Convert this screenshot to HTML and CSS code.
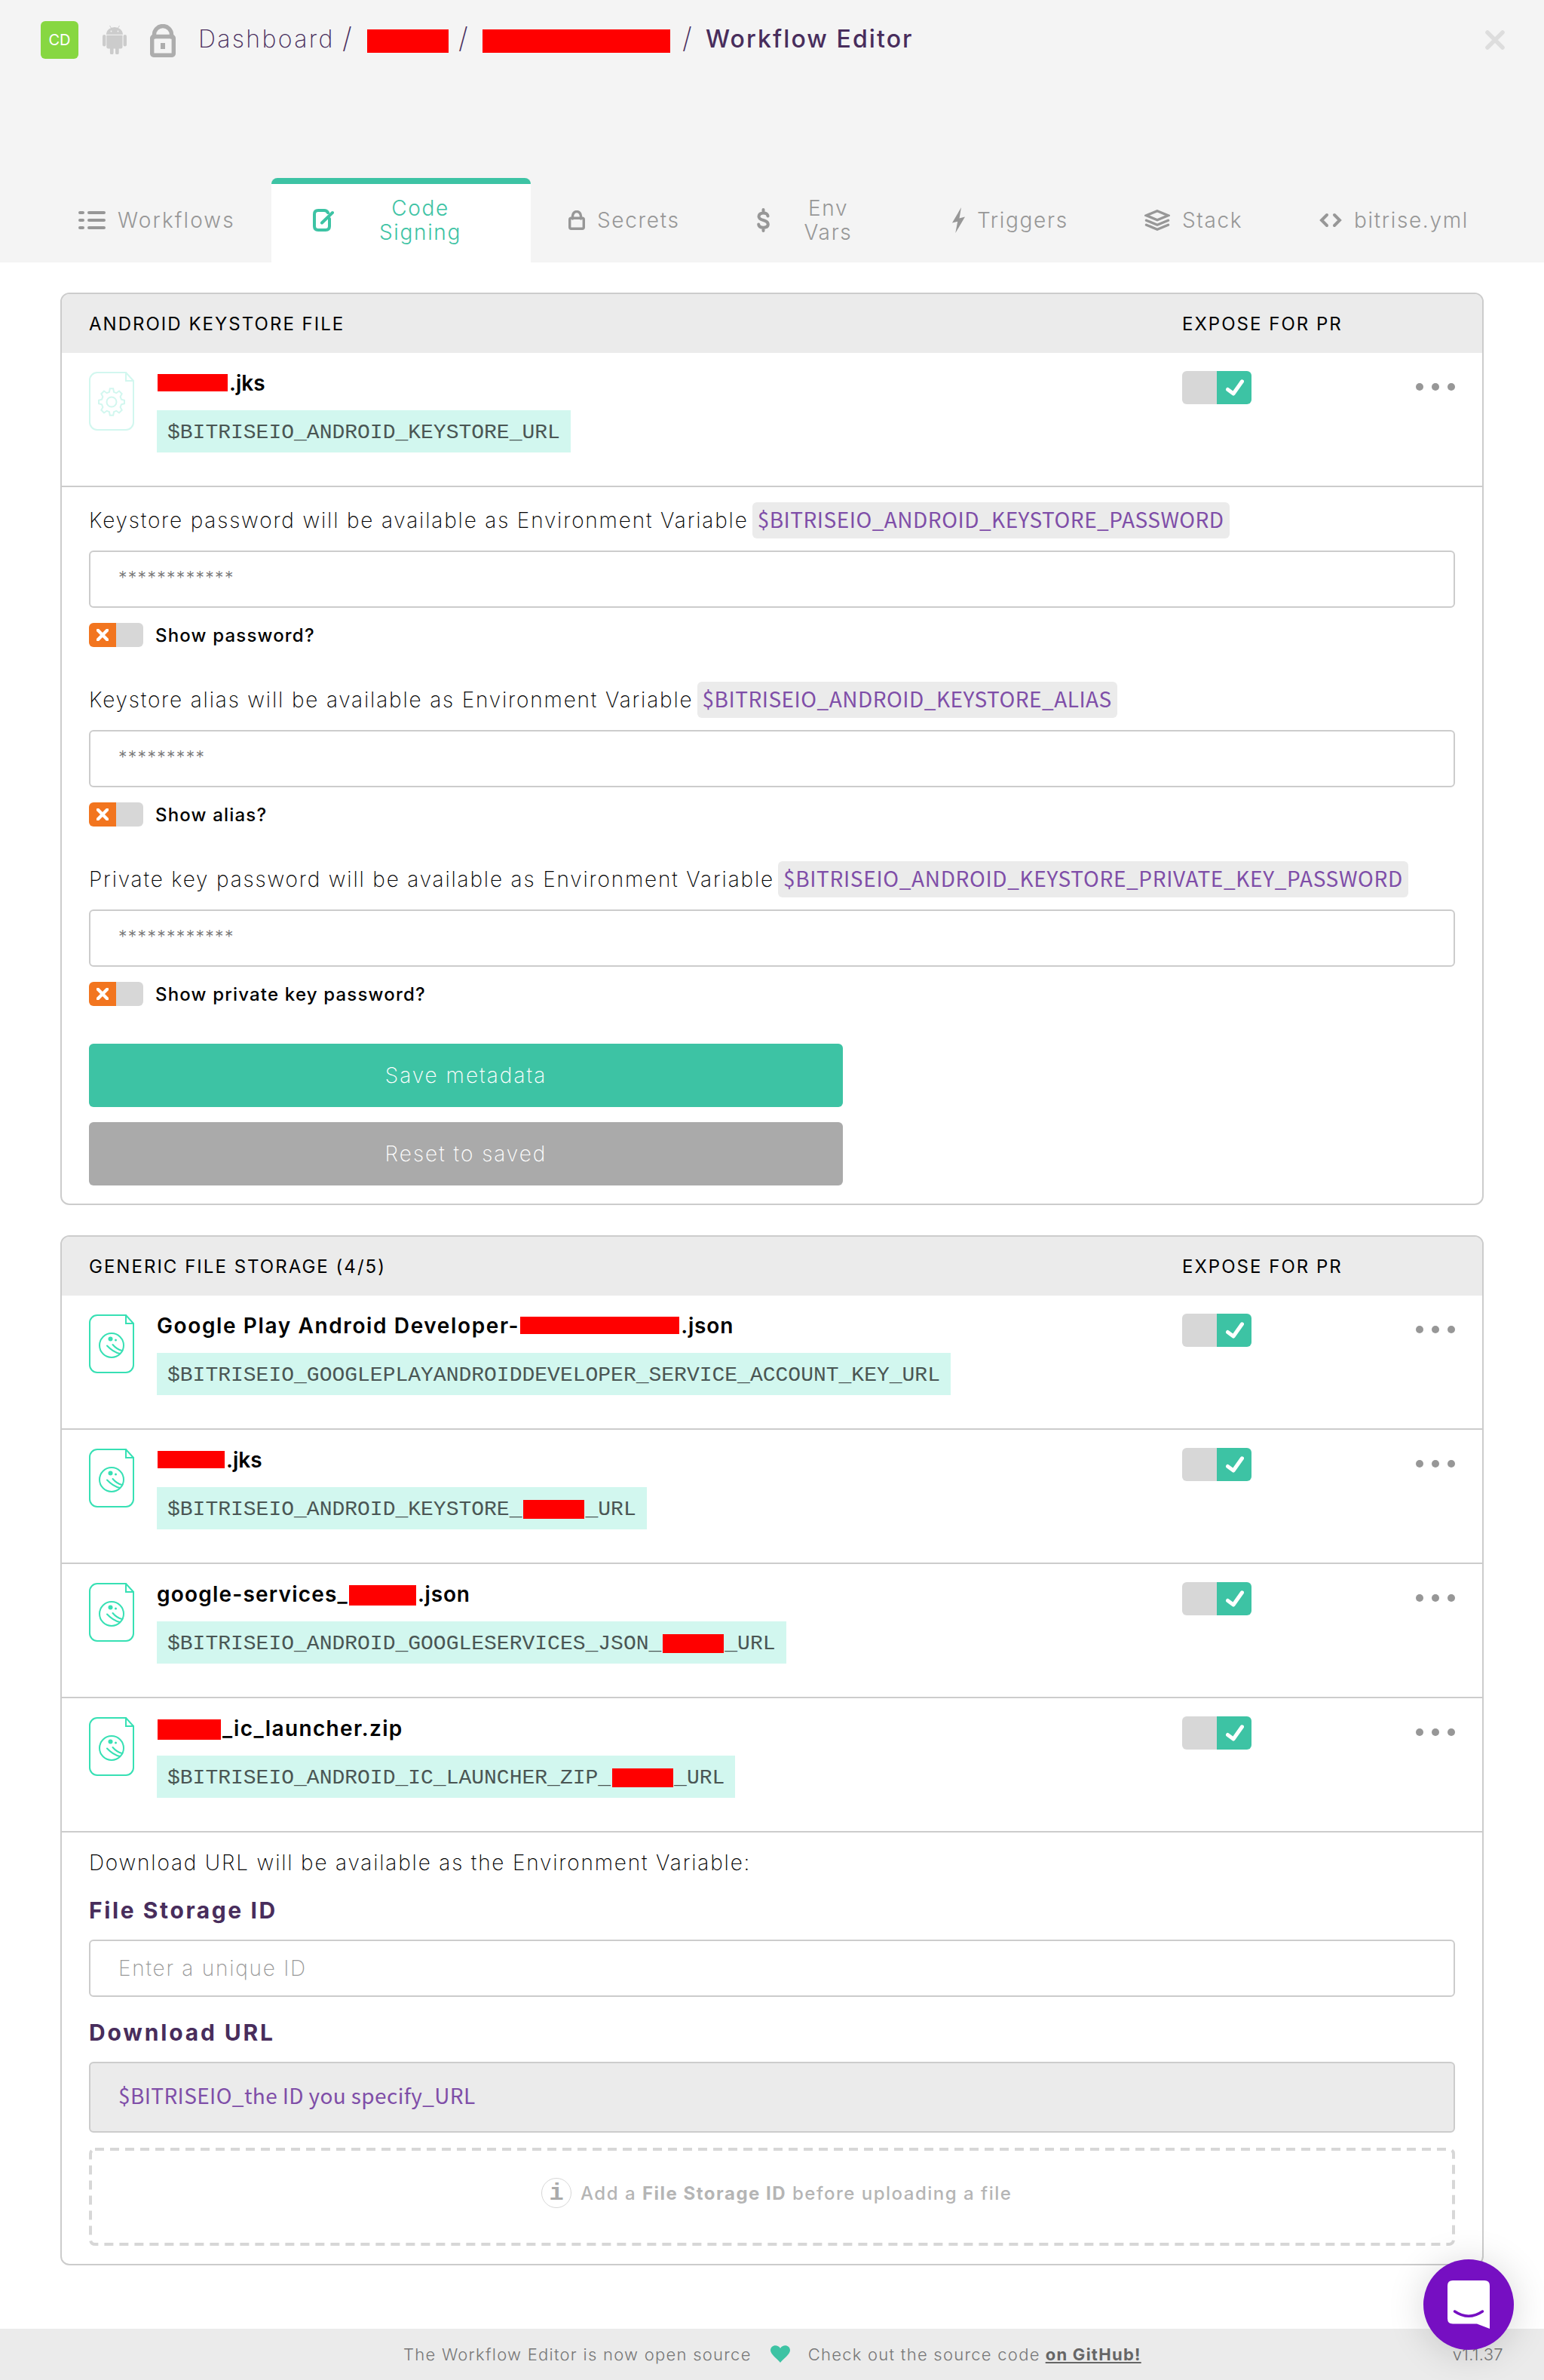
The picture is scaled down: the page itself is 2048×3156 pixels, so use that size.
FILE: index.html
```html
<!DOCTYPE html>
<html lang="en">
<head>
<meta charset="utf-8">
<title>Workflow Editor</title>
<link rel="stylesheet" href="styles.css">
</head>
<body>
<svg class="defs" width="0" height="0" aria-hidden="true">
  <symbol id="file" viewBox="0 0 60 78">
    <path d="M49 1H11A10 10 0 0 0 1 11V67A10 10 0 0 0 11 77H49A10 10 0 0 0 59 67V12Z"/>
    <path d="M49 1V12H59"/>
  </symbol>
  <symbol id="planet" viewBox="0 0 60 78">
    <circle cx="30" cy="41" r="16"/>
    <path d="M24 41.500Q32 50 41 52M31.500 40Q37 46.500 44 48"/>
    <circle cx="28.500" cy="32.500" r="3" class="dot"/>
    <circle cx="35.500" cy="34" r="1.500" class="dot"/>
  </symbol>
  <symbol id="check" viewBox="0 0 24 22">
    <path d="M2.500 13.500 10 19 21.500 2.800"/>
  </symbol>
  <symbol id="cross" viewBox="0 0 26 26">
    <path d="M3 3 23 23M23 3 3 23"/>
  </symbol>
</svg>

<header class="top">
  <div class="crumbs">
    <span class="logo">CD</span>
    <svg class="android" viewBox="0 0 32 38">
      <path class="antenna" d="M9.500 0 12 4M22.500 0 20 4"/>
      <path d="M5 11.700A10.900 9.700 0 0 1 26.900 11.700Z"/>
      <path d="M5.300 12.700H26.500V28Q26.500 30.500 24 30.500H21.700V36A2.350 2.350 0 0 1 17 36V30.500H14.600V36A2.350 2.350 0 0 1 9.900 36V30.500H8Q5.300 30.500 5.300 28Z"/>
      <rect x="0" y="12" width="4.400" height="15.400" rx="2.200"/>
      <rect x="27.600" y="12" width="4.400" height="15.400" rx="2.200"/>
      <circle class="eye" cx="11.500" cy="7.500" r=".9"/><circle class="eye" cx="20.500" cy="7.500" r=".9"/>
    </svg>
    <svg class="biglock" viewBox="0 0 34 44">
      <path d="M5.500 17V14A11.300 11.300 0 0 1 28.500 14V17"/>
      <rect x="2.700" y="16.500" width="28.600" height="24.800" rx="2"/>
      <rect class="hole" x="14" y="25" width="6" height="8"/>
    </svg>
    <span class="crumb">Dashboard</span>
    <span class="slash">/</span>
    <i class="red r1"></i>
    <span class="slash">/</span>
    <i class="red r2"></i>
    <span class="slash">/</span>
    <span class="here">Workflow Editor</span>
    <svg class="close" viewBox="0 0 26 26"><use href="#cross"/></svg>
  </div>
  <nav class="tabs">
    <a class="tab first">
      <svg width="36" height="24" viewBox="0 0 36 24" class="stroke4"><path d="M2 2H6M14 2H34M2 12H6M14 12H34M2 22H6M14 22H34"/></svg>
      <span>Workflows</span>
    </a>
    <a class="tab active">
      <svg width="28" height="30" viewBox="0 0 28 30" class="stroke4"><path d="M22 13V23Q22 28 17 28H7Q2 28 2 23V7Q2 2 7 2H15Q18.500 2 20 5M12 18.500 26 5"/></svg>
      <span class="two">Code<br>Signing</span>
    </a>
    <a class="tab">
      <svg width="22" height="26" viewBox="0 0 22 26" class="lock"><path d="M5.500 11V7.500A5.500 6 0 0 1 16.500 7.500V11"/><rect x="1.700" y="10.200" width="18.600" height="14" rx="2"/></svg>
      <span>Secrets</span>
    </a>
    <a class="tab">
      <svg width="17" height="32" viewBox="0 0 17 32" class="stroke4"><path d="M14.500 10.500Q14 6.500 8.500 6.500T2.500 11Q2.500 14.500 8.500 16T14.800 21.500Q14.500 25.700 8.500 25.700T2.200 21.500M8.500 2V5M8.500 27V30"/></svg>
      <span class="two env">Env<br>Vars</span>
    </a>
    <a class="tab">
      <svg width="17" height="34" viewBox="0 0 17 34"><path fill="currentColor" d="M12 0 0 20.500 7.200 18.800 4.300 34 17 12.500 9.500 14.500Z"/></svg>
      <span>Triggers</span>
    </a>
    <a class="tab">
      <svg width="34" height="28" viewBox="0 0 34 28" class="layers"><path d="M17 1.700 31.500 7.700 17 13.700 2.500 7.700ZM2.500 14.200 17 20.200 31.500 14.200M2.500 20.200 17 26.200 31.500 20.200"/></svg>
      <span>Stack</span>
    </a>
    <a class="tab">
      <svg width="30" height="20" viewBox="0 0 30 20" class="stroke4"><path d="M10 3 3 10 10 17M20 3 27 10 20 17"/></svg>
      <span>bitrise.yml</span>
    </a>
  </nav>
</header>

<main>
  <section class="panel">
    <div class="head"><span>ANDROID KEYSTORE FILE</span><span>EXPOSE FOR PR</span></div>
    <div class="row">
      <svg class="file faded" viewBox="0 0 60 78"><use href="#file"/><circle cx="30" cy="40" r="6.500"/>
        <path d="M27.800 22.300H32.200L33 26.800L36.300 28.200L40 25.500L43.700 29.200L41.600 33L43 36.600L47 37.800V42.200L43 43.400L41.600 47L43.700 50.800L40 54.500L36.300 51.800L33 53.200L32.200 57.700H27.800L27 53.200L23.700 51.800L20 54.500L16.300 50.800L18.400 47L17 43.400L13 42.200V37.800L17 36.600L18.400 33L16.300 29.200L20 25.500L23.700 28.200L27 26.800Z"/></svg>
      <div class="info">
        <div class="name"><i class="red n0"></i><span>.jks</span></div>
        <div class="tag">$BITRISEIO_ANDROID_KEYSTORE_URL</div>
      </div>
      <span class="switch on"><svg viewBox="0 0 24 22"><use href="#check"/></svg></span>
      <span class="dots"><i></i><i></i><i></i></span>
    </div>
    <div class="form">
      <div class="field">
        <div class="label"><span>Keystore password will be available as Environment Variable</span><code>$BITRISEIO_ANDROID_KEYSTORE_PASSWORD</code></div>
        <div class="input stars">************</div>
        <div class="show"><span class="switch off"><svg viewBox="0 0 26 26"><use href="#cross"/></svg></span><span>Show password?</span></div>
      </div>
      <div class="field">
        <div class="label"><span>Keystore alias will be available as Environment Variable</span><code>$BITRISEIO_ANDROID_KEYSTORE_ALIAS</code></div>
        <div class="input stars">*********</div>
        <div class="show"><span class="switch off"><svg viewBox="0 0 26 26"><use href="#cross"/></svg></span><span>Show alias?</span></div>
      </div>
      <div class="field">
        <div class="label"><span>Private key password will be available as Environment Variable</span><code class="long">$BITRISEIO_ANDROID_KEYSTORE_PRIVATE_KEY_PASSWORD</code></div>
        <div class="input stars">************</div>
        <div class="show"><span class="switch off"><svg viewBox="0 0 26 26"><use href="#cross"/></svg></span><span>Show private key password?</span></div>
      </div>
      <div class="button save">Save metadata</div>
      <div class="button reset">Reset to saved</div>
    </div>
  </section>

  <section class="panel">
    <div class="head"><span>GENERIC FILE STORAGE (4/5)</span><span>EXPOSE FOR PR</span></div>
    <div class="row">
      <svg class="file" viewBox="0 0 60 78"><use href="#file"/><use href="#planet"/></svg>
      <div class="info">
        <div class="name"><span class="wide">Google Play Android Developer-</span><i class="red n1"></i><span class="ext">.json</span></div>
        <div class="tag">$BITRISEIO_GOOGLEPLAYANDROIDDEVELOPER_SERVICE_ACCOUNT_KEY_URL</div>
      </div>
      <span class="switch on"><svg viewBox="0 0 24 22"><use href="#check"/></svg></span>
      <span class="dots"><i></i><i></i><i></i></span>
    </div>
    <div class="row">
      <svg class="file" viewBox="0 0 60 78"><use href="#file"/><use href="#planet"/></svg>
      <div class="info">
        <div class="name"><i class="red n2"></i><span>.jks</span></div>
        <div class="tag">$BITRISEIO_ANDROID_KEYSTORE_<i class="red"></i>_URL</div>
      </div>
      <span class="switch on"><svg viewBox="0 0 24 22"><use href="#check"/></svg></span>
      <span class="dots"><i></i><i></i><i></i></span>
    </div>
    <div class="row">
      <svg class="file" viewBox="0 0 60 78"><use href="#file"/><use href="#planet"/></svg>
      <div class="info">
        <div class="name"><span class="services">google-services_</span><i class="red n3"></i><span class="ext">.json</span></div>
        <div class="tag">$BITRISEIO_ANDROID_GOOGLESERVICES_JSON_<i class="red"></i>_URL</div>
      </div>
      <span class="switch on"><svg viewBox="0 0 24 22"><use href="#check"/></svg></span>
      <span class="dots"><i></i><i></i><i></i></span>
    </div>
    <div class="row">
      <svg class="file" viewBox="0 0 60 78"><use href="#file"/><use href="#planet"/></svg>
      <div class="info">
        <div class="name"><i class="red n4"></i><span class="launcher">_ic_launcher.zip</span></div>
        <div class="tag">$BITRISEIO_ANDROID_IC_LAUNCHER_ZIP_<i class="red"></i>_URL</div>
      </div>
      <span class="switch on"><svg viewBox="0 0 24 22"><use href="#check"/></svg></span>
      <span class="dots"><i></i><i></i><i></i></span>
    </div>
    <div class="form">
      <p class="intro">Download URL will be available as the Environment Variable:</p>
      <h3>File Storage ID</h3>
      <div class="input placeholder">Enter a unique ID</div>
      <h3 class="second">Download URL</h3>
      <div class="input readonly">$BITRISEIO_the ID you specify_URL</div>
      <div class="drop">
        <svg class="dash" width="1812" height="130"><rect x="2" y="2" width="1808" height="126" rx="6"/></svg>
        <span class="badge">i</span>
        <span class="hint">Add a <b>File Storage ID</b> before uploading a file</span>
      </div>
    </div>
  </section>
</main>

<footer>
  <span>The Workflow Editor is now open source</span>
  <svg class="heart" viewBox="0 0 26 23"><path d="M13 23C9 18 0 12 0 6.500C0-.500 9.500-2.200 13 4C16.500-2.200 26-.500 26 6.500C26 12 17 18 13 23Z"/></svg>
  <span>Check out the source code</span>
  <b>on GitHub!</b>
  <span class="version">v1.1.37</span>
</footer>
<div class="chat"><svg viewBox="0 0 56 64"><path class="bubble" d="M7 0H49Q56 0 56 7V64L39 57.500H7Q0 57.500 0 50.500V7Q0 0 7 0Z"/><path class="smile" d="M9.500 41Q28 53.500 46.500 41"/></svg></div>
</body>
</html>
```
FILE: styles.css
```css
* { box-sizing: border-box; }
body { margin: 0; background: #fff; color: #000; font-family: Inter, "Liberation Sans", sans-serif; font-size: 28px; font-weight: 200; }
svg { display: block; flex: none; fill: none; stroke-linecap: round; }
.defs { position: absolute; }
.red { display: block; flex: none; background: #f00; }

/* Header */
.top { height: 348px; background: #f4f4f4; display: flex; flex-direction: column; justify-content: space-between; }
.crumbs { display: flex; align-items: flex-start; height: 110px; padding-left: 54px; color: #482d5c; font-size: 32px; line-height: 40px; }
.logo { width: 50px; height: 50px; margin-top: 28px; border-radius: 6px; background: #87d741; color: #fff; font-size: 20px; font-weight: 400; line-height: 50px; text-align: center; }
.android { width: 32px; height: 38px; margin: 34px 0 0 32px; fill: #ccc; }
.android .antenna { stroke: #ccc; stroke-width: 1; }
.android .eye { fill: #f4f4f4; }
.biglock { width: 34px; height: 44px; margin: 32px 0 0 31px; stroke: #adadad; stroke-width: 5.400; }
.biglock .hole { fill: #adadad; stroke: none; }
.crumb { width: 191px; margin: 32px 0 0 30px; letter-spacing: 2.350px; }
.slash { width: 32px; margin-top: 30px; font-size: 38px; }
.r1, .r2 { height: 31px; }
.r1 { width: 108px; margin: 39px 13px 0 1px; }
.r2 { width: 249px; margin: 39px 16px 0 0; }
.here { margin: 32px 0 0 -1px; font-weight: 500; letter-spacing: 2.100px; }
.close { width: 26px; height: 26px; margin: 40px 52px 0 auto; stroke: #ddd; stroke-width: 5.500; }

.tabs { display: grid; grid-template-columns: 360px 344px 250px 259px 255px 232px 1fr; height: 112px; color: #979797; font-weight: 300; letter-spacing: 1.650px; }
.tab { display: flex; align-items: center; gap: 16px; padding-left: 50px; line-height: 32px; }
.first { padding-left: 104px; letter-spacing: 2.100px; }
.active { padding: 0 0 8px 55px; border-top: 8px solid #3dc3a4; border-radius: 8px 8px 0 0; background: #fff; color: #3dc3a4; }
.two { width: 197px; text-align: center; }
.env { width: 123px; }
.stroke4 { stroke: currentColor; stroke-width: 4; }
.lock, .layers { stroke: currentColor; stroke-width: 3.400; }

/* Panels */
main { display: flex; flex-direction: column; gap: 40px; padding: 40px 80px 84px; }
.panel { border: 2px solid #ccc; border-radius: 12px; overflow: hidden; }
.head { display: grid; grid-template-columns: 1450px 1fr; height: 78px; padding-left: 36px; background: #ebebeb; font-size: 24px; font-weight: 400; letter-spacing: 2.020px; line-height: 79px; }
.row { display: grid; grid-template-columns: 90px 1360px 310px auto; align-items: start; height: 178px; padding-left: 36px; border-bottom: 2px solid #ccc; }
.file { width: 60px; height: 78px; margin-top: 25px; stroke: #37e0b4; stroke-width: 2; }
.dot { fill: #37e0b4; stroke: none; }
.faded { stroke: #d2f7ef; }
.name { display: flex; height: 56px; margin-top: 20px; font-weight: 600; line-height: 40px; }
.name .red { height: 23px; margin: 8px 2px 0 1px; }
.name .n0 { width: 93px; }
.name .n1 { width: 211px; }
.name .n2 { width: 89px; }
.name .n3 { width: 89px; height: 27px; }
.name .n4 { width: 84px; height: 27px; }
.wide { letter-spacing: 1.620px; }
.services { letter-spacing: 1.200px; }
.launcher { letter-spacing: 1.350px; }
.ext { letter-spacing: .800px; }
.tag { display: flex; width: max-content; height: 56px; padding: 0 14px; background: #d2f7ef; color: #4a5654; font-family: "Liberation Mono", monospace; line-height: 60px; }
.tag .red { width: 81px; height: 25px; margin: 17px 1px 0 2px; }
.switch { display: flex; align-items: center; border-radius: 6px; }
.on { width: 92px; height: 44px; margin-top: 24px; padding-left: 58px; background: linear-gradient(90deg, #d7d7d7 50%, #3dc3a4 50%); }
.on svg { width: 24px; height: 22px; stroke: #fff; stroke-width: 5; stroke-linejoin: round; }
.off { width: 72px; height: 32px; padding-left: 10px; background: linear-gradient(90deg, #f2751f 50%, #d7d7d7 50%); }
.off svg { width: 16px; height: 16px; stroke: #fff; stroke-width: 7; }
.dots { display: flex; gap: 11px; margin-top: 40px; }
.dots i { width: 10px; height: 10px; border-radius: 50%; background: #979797; }

/* Forms */
.form { padding: 20px 36px 24px; }
.field { height: 238px; }
.label { display: flex; height: 48px; gap: 5px; letter-spacing: 1.820px; line-height: 48px; white-space: nowrap; }
code { height: 48px; padding: 0 7px; border-radius: 6px; background: #ebebeb; color: #7f4ea8; font: 400 28px/44px "Noto Sans CJK JP", "Noto Sans", sans-serif; letter-spacing: .500px; }
code.long { letter-spacing: .670px; }
.input { height: 76px; padding-left: 37px; border: 2px solid #ccc; border-radius: 6px; }
.stars { margin-top: 16px; color: #777; font-size: 23px; font-weight: 300; letter-spacing: 1.300px; line-height: 69px; }
.show { display: flex; gap: 16px; height: 32px; margin-top: 20px; font-size: 24px; font-weight: 500; letter-spacing: 1.180px; line-height: 34px; }
.button { width: 1000px; height: 84px; border-radius: 6px; color: #fff; letter-spacing: 2px; line-height: 84px; text-align: center; }
.save { margin-top: 4px; background: #3dc3a4; }
.reset { margin-top: 20px; background: #aaa; }
.intro { margin: 0; letter-spacing: 1.810px; line-height: 40px; }
h3 { margin: 22px 0 18px; color: #482d5c; font-size: 30px; font-weight: 700; letter-spacing: 2.600px; line-height: 42px; }
h3.second { margin-top: 26px; letter-spacing: 2.850px; }
.placeholder { color: #999; letter-spacing: 1.750px; line-height: 72px; }
.readonly { height: 94px; background: #ebebeb; color: #7f4ea8; font: 400 28px/84px "Noto Sans CJK JP", "Noto Sans", sans-serif; letter-spacing: .380px; }
.drop { position: relative; display: flex; align-items: flex-start; height: 130px; margin-top: 20px; padding-left: 600px; }
.dash { position: absolute; left: 0; top: 0; stroke: #d7d7d7; stroke-width: 4; stroke-dasharray: 12 8; stroke-linecap: butt; }
.badge { width: 40px; height: 40px; margin: 40px 12px 0 0; border: 1px solid #d7d7d7; border-radius: 50%; color: #aaa; font: 700 32px/40px "Liberation Mono", monospace; text-align: center; }
.hint { margin-top: 41px; color: #b5b5b5; font-size: 24px; font-weight: 500; letter-spacing: 1.500px; line-height: 40px; }

/* Footer */
footer { display: flex; height: 68px; padding: 0 54px 0 535px; background: #ebebeb; color: #777; font-size: 22px; font-weight: 300; letter-spacing: 1.260px; line-height: 68px; }
.heart { width: 26px; height: 23px; margin: 22px 24px 0 25px; fill: #3dc3a4; }
footer b { margin-left: 7px; color: #666; font-weight: 700; text-decoration: underline; }
.version { margin-left: auto; letter-spacing: .300px; }

.chat { position: absolute; left: 1888px; top: 2996px; width: 120px; height: 120px; padding: 28px 32px; border-radius: 50%; background: #760fc2; box-shadow: 0 4px 50px rgba(0, 0, 0, .16); }
.chat svg { width: 56px; height: 64px; }
.bubble { fill: #fff; }
.smile { stroke: #760fc2; stroke-width: 3.500; }
```
